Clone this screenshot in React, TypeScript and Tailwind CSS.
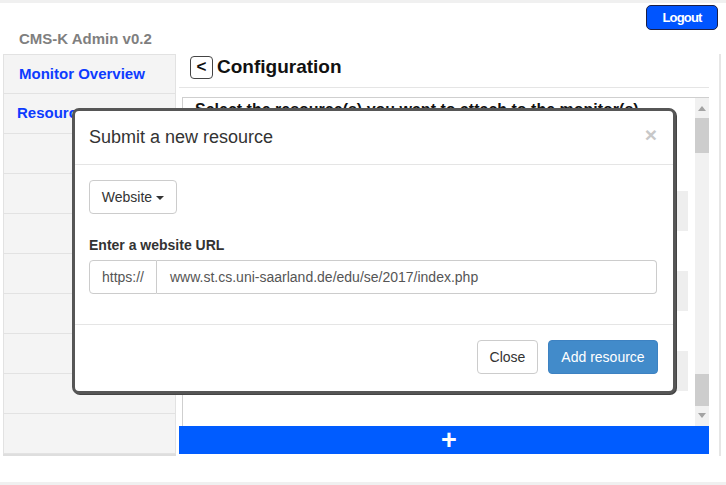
const sideItems = ['Monitor Overview', 'Resources', '', '', '', '', '', '', '', '']
const rows = [false, true, false, true, false, true, false]

function Modal() {
  return (
    <div className="absolute left-[72px] top-[105px] w-[604px] rounded-[7px] border-[3px] border-[#565656] bg-white shadow-[1px_1px_0_#444]">
      <div className="flex h-[54px] items-center justify-between border-b border-[#e5e5e5] pl-[14px] pr-[16px]">
        <span className="text-[18px] text-[#333]">Submit a new resource</span>
        <span className="-mt-[6px] text-[21px] font-bold leading-none text-[#c8c8c8]">×</span>
      </div>
      <div className="px-[14px] pt-[15px] pb-[30px]">
        <button className="flex h-[34px] w-[88px] items-center justify-center gap-[4px] rounded-[4px] border border-[#ccc] text-[14px] text-[#333]">
          Website
          <span className="mt-[1px] h-0 w-0 border-x-[4px] border-t-[4px] border-x-transparent border-t-[#333]" />
        </button>
        <div className="mt-[21px] mb-[5px] text-[14px] leading-[20px] font-bold text-[#333]">Enter a website URL</div>
        <div className="flex h-[34px] w-[568px] text-[14px] text-[#555]">
          <div className="flex w-[68px] items-center justify-center rounded-l-[4px] border border-[#ccc]">https://</div>
          <div className="flex flex-1 items-center rounded-r-[4px] border border-l-0 border-[#ccc] pl-[13px]">
            www.st.cs.uni-saarland.de/edu/se/2017/index.php
          </div>
        </div>
      </div>
      <div className="flex justify-end gap-[10px] border-t border-[#e5e5e5] px-[15px] pt-[15px] pb-[17px]">
        <button className="h-[34px] w-[61px] rounded-[4px] border border-[#ccc] text-[14px] text-[#333]">Close</button>
        <button className="h-[34px] w-[110px] rounded-[4px] border border-[#3d82c2] bg-[#428bca] text-[14px] text-white">
          Add resource
        </button>
      </div>
    </div>
  )
}

export default function App() {
  return (
    <div className="h-[485px] w-[726px] bg-[#f0f0f0] py-[3px] font-['Liberation_Sans',Arial,sans-serif]">
      <div className="relative h-full bg-white">
        <div className="flex justify-end pt-[2px] pr-[8px]">
          <button className="h-[25px] w-[72px] rounded-[5px] border border-[#1b1f45] bg-[#0055ff] text-[13px] font-bold tracking-[-0.8px] text-white">
            Logout
          </button>
        </div>
        <div className="pl-[19px] text-[15px] leading-[18px] font-bold text-[#7f7f7f]">CMS-K Admin v0.2</div>
        <div className="mt-[6px] flex">
          <div className="ml-[3px] w-[173px] border-b-2 border-[#dedede]">
            {sideItems.map((s, i) => (
              <div
                key={i}
                className={
                  'flex h-[40px] items-center border border-t-0 border-[#e2e2e2] bg-[#f4f4f4] text-[15px] font-bold text-[#0d3bff] first:border-t ' +
                  (i === 1 ? 'pl-[13px]' : 'pl-[15px]')
                }
              >
                {s}
              </div>
            ))}
          </div>
          <div className="flex w-[545px] flex-col border-r-2 border-[#e6e6e6] pr-[10px] pl-[3px]">
            <div className="mt-[1px] flex h-[24px] items-center pl-[11px]">
              <div className="flex h-[23px] w-[23px] items-center justify-center rounded-[4px] border-[1.5px] border-[#444] pb-[2px] text-[17px] font-bold leading-none text-[#111]">
                &lt;
              </div>
              <span className="ml-[4px] text-[19px] font-bold text-[#111]">Configuration</span>
            </div>
            <div className="mt-[8px] border-t border-[#e5e5e5]" />
            <div className="mt-[9px] ml-[3px] flex h-[329px] border-t border-l border-[#cfcfcf]">
              <div className="flex-1 pr-[7px]">
                <div className="pt-[3px] pl-[12px] text-[16px] leading-[18px] font-bold text-[#111]">
                  Select the resource(s) you want to attach to the monitor(s)
                </div>
                <div className="mt-[32px]">
                  {rows.map((g, i) => (
                    <div key={i} className={'h-[40px] ' + (g ? 'bg-[#eeeeee]' : 'bg-white')} />
                  ))}
                </div>
              </div>
              <div className="flex w-[14px] flex-col items-center bg-[#f1f1f1]">
                <span className="mt-[8px] h-0 w-0 border-x-[4px] border-b-[5px] border-x-transparent border-b-[#a3a3a3]" />
                <div className="mt-[7px] h-[35px] w-full bg-[#cdcdcd]" />
                <div className="mt-[221px] h-[32px] w-full bg-[#cdcdcd]" />
                <span className="mt-[7px] h-0 w-0 border-x-[4px] border-t-[5px] border-x-transparent border-t-[#a3a3a3]" />
              </div>
            </div>
            <div className="flex h-[28px] items-center justify-center bg-[#005cff] pl-[10px] text-[27px] leading-none font-bold text-white">
              +
            </div>
          </div>
        </div>
        <Modal />
      </div>
    </div>
  )
}
